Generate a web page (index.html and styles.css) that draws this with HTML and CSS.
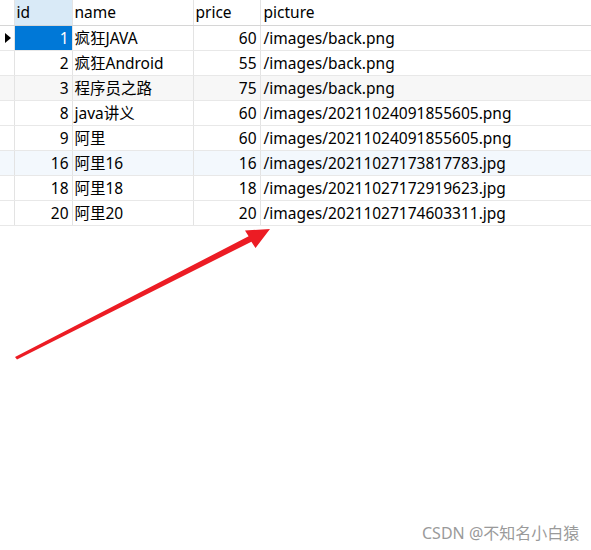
FILE: index.html
```html
<!DOCTYPE html>
<html lang="zh">
<head>
<meta charset="utf-8">
<link rel="stylesheet" href="styles.css">
</head>
<body>
<div class="page">
  <table class="grid">
    <colgroup>
      <col class="c-ind"><col class="c-id"><col class="c-name"><col class="c-price"><col class="c-pic">
    </colgroup>
    <thead>
      <tr>
        <th class="ind"></th>
        <th class="id-h">id</th>
        <th>name</th>
        <th>price</th>
        <th class="pic">picture</th>
      </tr>
    </thead>
    <tbody>
      <tr><td class="ind"><span class="tri"></span></td><td class="num sel">1</td><td>疯狂JAVA</td><td class="num">60</td><td class="pic">/images/back.png</td></tr>
      <tr><td class="ind"></td><td class="num">2</td><td>疯狂Android</td><td class="num">55</td><td class="pic">/images/back.png</td></tr>
      <tr class="alt"><td class="ind"></td><td class="num">3</td><td>程序员之路</td><td class="num">75</td><td class="pic">/images/back.png</td></tr>
      <tr><td class="ind"></td><td class="num">8</td><td>java讲义</td><td class="num">60</td><td class="pic">/images/20211024091855605.png</td></tr>
      <tr><td class="ind"></td><td class="num">9</td><td>阿里</td><td class="num">60</td><td class="pic">/images/20211024091855605.png</td></tr>
      <tr class="hov"><td class="ind"></td><td class="num">16</td><td>阿里16</td><td class="num">16</td><td class="pic">/images/20211027173817783.jpg</td></tr>
      <tr><td class="ind"></td><td class="num">18</td><td>阿里18</td><td class="num">18</td><td class="pic">/images/20211027172919623.jpg</td></tr>
      <tr><td class="ind"></td><td class="num">20</td><td>阿里20</td><td class="num">20</td><td class="pic">/images/20211027174603311.jpg</td></tr>
    </tbody>
  </table>
  <svg class="arrow" width="591" height="550" viewBox="0 0 591 550">
    <polygon points="15,357 248.6,236.3 245,230.5 270,229 255.5,248 251.4,241.7 17,359.5" fill="#ec1c24"/>
  </svg>
  <div class="mark">CSDN @不知名小白猿</div>
</div>
</body>
</html>
```
FILE: styles.css
```css
html, body {
  margin: 0;
  padding: 0;
  background: #ffffff;
}
.page {
  position: relative;
  width: 591px;
  height: 550px;
  overflow: hidden;
  font-family: "Noto Sans", "Noto Sans CJK SC", sans-serif;
  font-size: 15.5px;
  color: #000;
}
.grid {
  border-collapse: collapse;
  table-layout: fixed;
  width: 591px;
}
.c-ind { width: 14px; }
.c-id { width: 58px; }
.c-name { width: 121px; }
.c-price { width: 67px; }
.c-pic { width: auto; }
.grid th, .grid td {
  height: 25px;
  padding: 1px 3px 0 2px;
  border-right: 1px solid #e3e3e3;
  border-bottom: 1px solid #e8e8e8;
  white-space: nowrap;
  overflow: hidden;
  line-height: 23px;
  box-sizing: border-box;
}
.grid th {
  font-weight: normal;
  text-align: left;
  border-bottom: 1px solid #d6d6d6;
}
.grid th.id-h { background: #d9eaf7; }
.grid .pic { border-right: none; padding-left: 3px; }
.grid .ind { padding: 0; position: relative; }
.grid .num { text-align: right; }
.grid td.sel { background: #0078d7; color: #fff; }
.grid tr.alt td { background: #f7f7f7; }
.grid tr.hov td { background: #f3f8fd; }
.tri {
  display: block;
  width: 0;
  height: 0;
  margin-left: 5px;
  border-top: 5px solid transparent;
  border-bottom: 5px solid transparent;
  border-left: 6px solid #000;
}
.arrow {
  position: absolute;
  left: 0;
  top: 0;
}
.mark {
  position: absolute;
  left: 422px;
  top: 522px;
  font-size: 16px;
  line-height: 22px;
  color: #9a9a9a;
  font-family: "Noto Sans", "Noto Sans CJK SC", sans-serif;
}
```
